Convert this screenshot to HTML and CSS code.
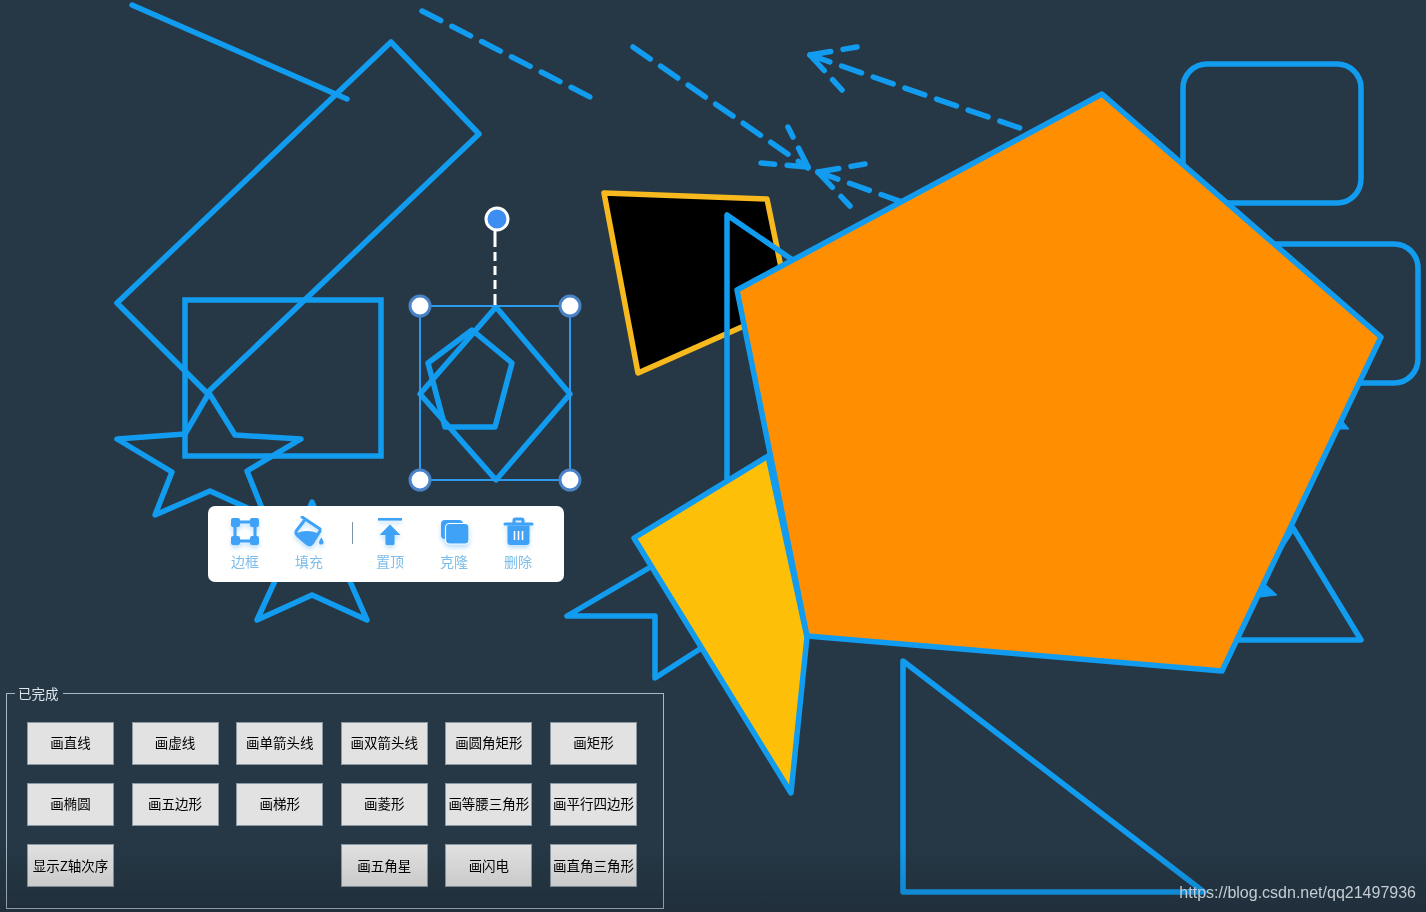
FILE: index.html
```html
<!DOCTYPE html>
<html lang="zh-CN">
<head>
<meta charset="utf-8">
<title>画图</title>
<link rel="stylesheet" href="styles.css">
</head>
<body>
<main class="stage">
  <svg class="canvas" viewBox="0 0 1426 912" width="1426" height="912" aria-label="画布">
    <line class="shape" x1="132" y1="5" x2="347" y2="99"/>
    <line class="shape dash" x1="422" y1="11" x2="592" y2="98"/>
    <line class="shape dash" x1="633" y1="47" x2="808" y2="168"/>
    <line class="shape dash" x1="808" y1="167" x2="788" y2="127"/>
    <line class="shape dash" x1="808" y1="167" x2="761" y2="163"/>
    <line class="shape dash" x1="810" y1="55" x2="1060" y2="142"/>
    <line class="shape dash" x1="810" y1="55" x2="857" y2="47"/>
    <line class="shape dash" x1="810" y1="55" x2="842" y2="90"/>
    <line class="shape dash" x1="818" y1="172" x2="930" y2="212"/>
    <line class="shape dash" x1="818" y1="172" x2="865" y2="164"/>
    <line class="shape dash" x1="818" y1="172" x2="850" y2="206"/>
    <polygon class="shape" points="391,42 479,134 207,393 117,303"/>
    <rect class="shape square" x="185" y="300" width="196" height="156"/>
    <polygon class="shape" points="117,439 185,434 209,393 235,435 301,439 247,471 265,516 210,491 155,515 172,472"/>
    <polygon class="shape" points="312,502 330,545 385,548 345,570 367,620 312,595 257,620 280,570 240,548 295,545"/>
    <polygon class="shape" points="496,307 570,394 496,480 420,394"/>
    <polygon class="shape" points="472,330 512,363 495,427 445,427 428,363"/>
    <rect class="frame" x="420" y="306" width="150" height="174"/>
    <line class="rotate-link" x1="495" y1="230" x2="495" y2="306"/>
    <circle class="rotate-handle" cx="497" cy="219" r="11"/>
    <circle class="handle" cx="420" cy="306" r="10"/>
    <circle class="handle" cx="570" cy="306" r="10"/>
    <circle class="handle" cx="420" cy="480" r="10"/>
    <circle class="handle" cx="570" cy="480" r="10"/>
    <rect class="shape" x="1183" y="64" width="178" height="139" rx="24"/>
    <rect class="shape" x="1180" y="244" width="238" height="139" rx="24"/>
    <polygon class="shape" points="1293,528 1361,640 1220,640"/>
    <polygon class="mark" points="1335,429 1349,429 1340,418"/>
    <polygon class="mark" points="1260,597 1277,595 1265,584"/>
    <polygon class="shape black" points="604,193 767,199 789,306 638,373"/>
    <polyline class="shape" points="800,265 727,215 727,500"/>
    <polyline class="shape" points="700,538 567,616 655,616 655,678 720,636"/>
    <polygon class="shape yellow" points="768,456 807,637 791,793 634,538"/>
    <polygon class="shape orange" points="1102,94 1381,337 1222,671 807,636 737,290"/>
    <polygon class="shape" points="903,661 1204,892 903,892"/>
  </svg>

  <nav class="toolbar">
    <div class="tool">
      <svg class="tool-icon" viewBox="0 0 32 32" width="32" height="32" aria-hidden="true">
        <rect class="ic-line" x="6" y="6" width="20" height="19"/>
        <rect class="ic-fill" x="2" y="2" width="9" height="9" rx="2"/>
        <rect class="ic-fill" x="21" y="2" width="9" height="9" rx="2"/>
        <rect class="ic-fill" x="2" y="20" width="9" height="9" rx="2"/>
        <rect class="ic-fill" x="21" y="20" width="9" height="9" rx="2"/>
      </svg>
      <span class="tool-label">边框</span>
    </div>
    <div class="tool">
      <svg class="tool-icon" viewBox="0 0 32 32" width="32" height="32" aria-hidden="true">
        <path class="ic-line" d="M11 5 L3.5 14.5 Q2 17 4.5 19.5 L13.5 27.5 Q17 30.5 19.5 27 L27 15"/>
        <path class="ic-fill" d="M4 17 Q14 13 25.5 17.5 L19.5 27 Q17 30.5 13.5 27.5 Z"/>
        <path class="ic-line" d="M9 1 L27 13"/>
        <path class="ic-fill" d="M28.3 21.5 Q31 25.5 30.5 27 A2.4 2.4 0 0 1 26 27 Q25.8 25.5 28.3 21.5 Z"/>
      </svg>
      <span class="tool-label">填充</span>
    </div>
    <div class="divider"></div>
    <div class="tool">
      <svg class="tool-icon" viewBox="0 0 32 32" width="32" height="32" aria-hidden="true">
        <rect class="ic-fill" x="4" y="2" width="24" height="2.6"/>
        <path class="ic-fill" d="M16 8.5 L26.5 19 L20.5 19 L20.5 27.5 Q20.5 29 19 29 L13 29 Q11.5 29 11.5 27.5 L11.5 19 L5.5 19 Z"/>
      </svg>
      <span class="tool-label">置顶</span>
    </div>
    <div class="tool">
      <svg class="tool-icon" viewBox="0 0 32 32" width="32" height="32" aria-hidden="true">
        <rect class="ic-fill" x="3" y="4" width="22" height="19" rx="4"/>
        <rect class="ic-front" x="7.5" y="7.5" width="23.5" height="20.5" rx="4"/>
      </svg>
      <span class="tool-label">克隆</span>
    </div>
    <div class="tool">
      <svg class="tool-icon" viewBox="0 0 32 32" width="32" height="32" aria-hidden="true">
        <path class="ic-fill" d="M5.5 9.5 H27.5 V26 Q27.5 29 24.5 29 H8.5 Q5.5 29 5.5 26 Z"/>
        <path class="ic-line" d="M3 8 H30"/>
        <path class="ic-line" d="M12 7 V4.5 Q12 3 13.5 3 H19.5 Q21 3 21 4.5 V7"/>
        <path class="ic-cut" d="M12.5 15 V24 M16.5 15 V24 M20.5 15 V24"/>
      </svg>
      <span class="tool-label">删除</span>
    </div>
  </nav>

  <section class="panel">
    <h2 class="panel-title">已完成</h2>
    <div class="panel-grid">
      <button class="btn">画直线</button>
      <button class="btn">画虚线</button>
      <button class="btn">画单箭头线</button>
      <button class="btn">画双箭头线</button>
      <button class="btn">画圆角矩形</button>
      <button class="btn">画矩形</button>
      <button class="btn">画椭圆</button>
      <button class="btn">画五边形</button>
      <button class="btn">画梯形</button>
      <button class="btn">画菱形</button>
      <button class="btn">画等腰三角形</button>
      <button class="btn">画平行四边形</button>
      <button class="btn">显示Z轴次序</button>
      <button class="btn btn-col4">画五角星</button>
      <button class="btn">画闪电</button>
      <button class="btn">画直角三角形</button>
    </div>
  </section>

  <div class="fade"></div>
  <div class="watermark">https://blog.csdn.net/qq21497936</div>
</main>
</body>
</html>
```

FILE: styles.css
```css
* { box-sizing: border-box; }

html, body {
  margin: 0;
  height: 100%;
  background: #263846;
}

.stage {
  position: relative;
  width: 1426px;
  height: 912px;
  overflow: hidden;
  background: #263846;
  display: flex;
  flex-direction: column;
  justify-content: flex-end;
  padding: 0 0 3px 6px;
  font-family: "Noto Sans CJK SC", "Liberation Sans", sans-serif;
  filter: blur(0.5px);
}

.canvas {
  position: absolute;
  left: 0;
  top: 0;
}

.shape {
  fill: none;
  stroke: #129cf0;
  stroke-width: 5.5;
  stroke-linejoin: round;
  stroke-linecap: round;
}

.square { stroke-linejoin: miter; }

.dash { stroke-dasharray: 21 12.5; }

.black { fill: #000; stroke: #f7b91d; }
.yellow { fill: #fdbf07; }
.orange { fill: #ff8f00; }
.mark { fill: #129cf0; stroke: #129cf0; stroke-width: 1; stroke-linejoin: round; }

.frame {
  fill: none;
  stroke: #2a9bee;
  stroke-width: 2;
}

.rotate-link {
  stroke: #fff;
  stroke-width: 3;
  stroke-dasharray: 17 5 9 5 9 5 9 5 11;
}

.rotate-handle {
  fill: #3d8ef0;
  stroke: #fff;
  stroke-width: 3;
}

.handle {
  fill: #fff;
  stroke: #4a82c6;
  stroke-width: 3;
}

.toolbar {
  position: absolute;
  left: 208px;
  top: 506px;
  width: 356px;
  height: 76px;
  padding: 10px 0 0 5px;
  display: flex;
  align-items: flex-start;
  background: #fff;
  border-radius: 7px;
}

.tool {
  width: 64px;
  display: flex;
  flex-direction: column;
  align-items: center;
}

.tool-icon {
  display: block;
  filter: drop-shadow(0 3px 2px rgba(63, 162, 247, 0.35));
}

.tool-label {
  margin-top: 3px;
  font-size: 14px;
  line-height: 20px;
  color: #7dbdea;
}

.divider {
  width: 1px;
  height: 22px;
  margin: 6px 5px 0 11px;
  background: #7c95a8;
}

.ic-fill { fill: #3fa2f7; }
.ic-line { fill: none; stroke: #3fa2f7; stroke-width: 3; stroke-linecap: round; }
.ic-front { fill: #3fa2f7; stroke: #fff; stroke-width: 1.2; }
.ic-cut { fill: none; stroke: #fff; stroke-width: 1.6; }

.panel {
  position: relative;
  width: 658px;
  height: 216px;
  padding: 28px 0 0 20px;
  border: 1px solid #a9b7c2;
}

.panel-title {
  position: absolute;
  left: 8px;
  top: -11px;
  margin: 0;
  padding: 0 4px 0 3px;
  font-size: 13.5px;
  font-weight: 400;
  line-height: 20px;
  color: #dfe7ec;
  background: #263846;
}

.panel-grid {
  display: grid;
  grid-template-columns: repeat(6, 87px);
  grid-auto-rows: 42.5px;
  column-gap: 17.6px;
  row-gap: 18.7px;
}

.btn {
  padding: 0 0 2px;
  border: 1px solid #8a99a3;
  background: #e2e2e2;
  color: #000;
  font-family: inherit;
  font-size: 13.5px;
  white-space: nowrap;
}

.btn-col4 { grid-column: 4; }

.fade {
  position: absolute;
  left: 0;
  right: 0;
  bottom: 0;
  height: 70px;
  background: linear-gradient(to bottom, rgba(0, 0, 0, 0), rgba(0, 0, 0, 0.17));
  pointer-events: none;
}

.watermark {
  position: absolute;
  right: 10px;
  bottom: 9px;
  font-family: "Liberation Sans", sans-serif;
  font-size: 16px;
  line-height: 20px;
  color: #c3ccd3;
}
```
